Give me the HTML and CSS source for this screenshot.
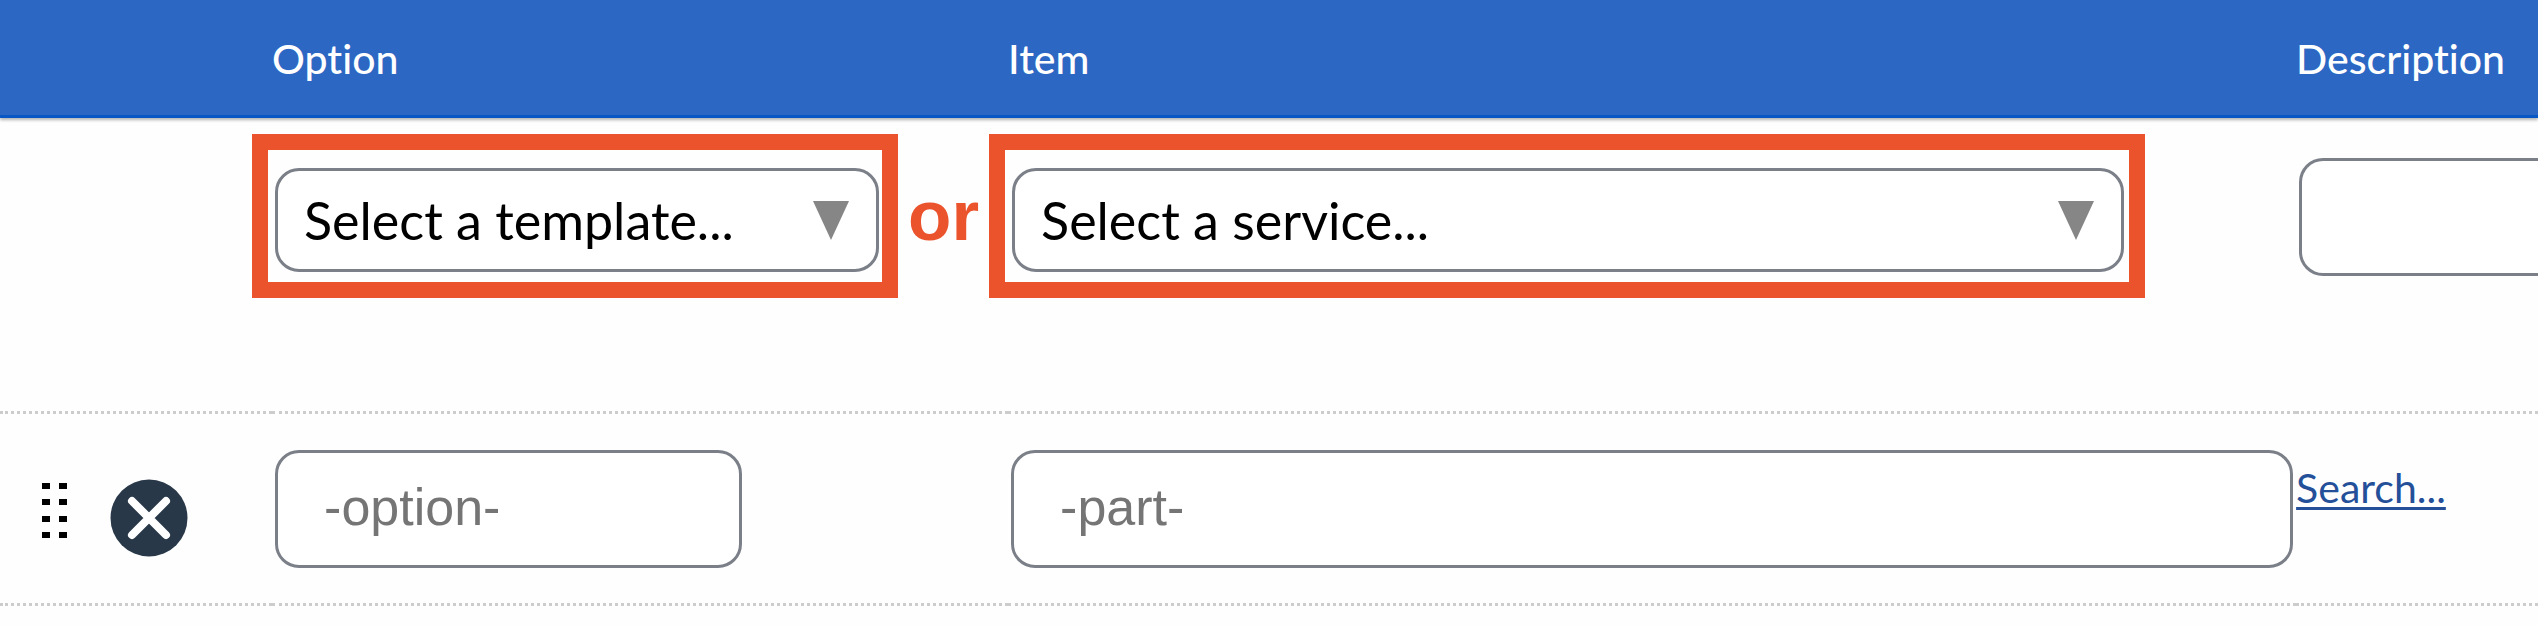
FILE: index.html
```html
<!DOCTYPE html>
<html lang="en">
  <head>
    <title>Line items</title>
    <meta charset="utf-8">
    <link rel="stylesheet" href="styles.css">
  </head>
  <body>

  <table class="items">
    <thead>
      <tr>
        <th class="col-actions"></th>
        <th class="col-option">Option</th>
        <th class="col-item">Item</th>
        <th class="col-description">Description</th>
      </tr>
    </thead>
    <tbody>
      <tr class="add-row">
        <td></td>
        <td>
          <div class="choice">
            <div class="highlight">
              <div class="picker">
                <select aria-label="Template">
                  <option>Select a template...</option>
                </select>
                <svg class="arrow" viewBox="0 0 36 39" aria-hidden="true"><path d="M0 0H36L18 39Z"/></svg>
              </div>
            </div>
            <span class="or">or</span>
          </div>
        </td>
        <td>
          <div class="highlight highlight-item">
            <div class="picker">
              <select aria-label="Service">
                <option>Select a service...</option>
              </select>
              <svg class="arrow" viewBox="0 0 36 39" aria-hidden="true"><path d="M0 0H36L18 39Z"/></svg>
            </div>
          </div>
        </td>
        <td class="description">
          <input type="text" class="field field-description" aria-label="Description">
        </td>
      </tr>
      <tr class="item-row">
        <td>
          <div class="actions">
            <button type="button" class="drag" aria-label="Move row">
              <svg width="28" height="56" viewBox="0 0 28 56">
                <path d="M2 1h8v6h-8zM19 1h8v6h-8zM2 17h8v6h-8zM19 17h8v6h-8zM2 34h8v6h-8zM19 34h8v6h-8zM2 50h8v6h-8zM19 50h8v6h-8z"/>
              </svg>
            </button>
            <button type="button" class="remove" aria-label="Remove row">
              <svg width="78" height="78" viewBox="0 0 78 78">
                <circle cx="39" cy="39" r="38.5" fill="#283848"/>
                <path d="M22 22L56 56M56 22L22 56" stroke="#fff" stroke-width="8" stroke-linecap="round"/>
              </svg>
            </button>
          </div>
        </td>
        <td><input type="text" class="field field-option" placeholder="-option-" aria-label="Option"></td>
        <td><input type="text" class="field field-part" placeholder="-part-" aria-label="Part"></td>
        <td><a class="search" href="#">Search...</a></td>
      </tr>
    </tbody>
  </table>

  </body>
</html>
```
FILE: styles.css
```css
body {
  margin: 0;
  background: #fefefe;
  color: #000;
  font-family: Lato, "Liberation Sans", sans-serif;
  font-variant-ligatures: none;
}

.items {
  width: 100%;
  table-layout: fixed;
  border-collapse: separate;
  border-spacing: 0;
}

thead tr {
  background: #2c67c3;
  box-shadow: 0 2px 3px rgba(0,0,0,0.3);
}

th,
td {
  padding: 0;
  text-align: left;
  vertical-align: top;
}

th {
  box-sizing: border-box;
  height: 118px;
  padding-top: 2px;
  border-bottom: 3px solid #0758c4;
  color: #fff;
  font-size: 41px;
  font-weight: 500;
  line-height: 48px;
  vertical-align: middle;
}

td {
  border-bottom: 3px dotted #ccc;
}

.col-actions {
  width: 10.72%;
}
.col-option {
  width: 29%;
}
.col-item {
  width: 50.75%;
}

/* new line */

.add-row td {
  height: 277px;
  padding-top: 16px;
}

.add-row .description {
  height: 253px;
  padding-top: 40px;
}

.choice {
  display: flex;
  align-items: center;
  margin: 0 19px 0 -20px;
}

.highlight {
  flex: 1;
  padding: 18px 3px 10px 7px;
  border: 16px solid #eb532d;
}

.highlight-item {
  margin: 0 151px 0 -19px;
  padding-right: 5px;
}

.or {
  width: 91px;
  color: #eb532d;
  font-family: "Liberation Sans", Arial, sans-serif;
  font-size: 71px;
  font-weight: bold;
  line-height: 80px;
  text-align: center;
}

.picker {
  display: grid;
  align-items: center;
}

.picker select,
.arrow {
  grid-area: 1 / 1;
}

.picker select {
  width: 100%;
  height: 104px;
  padding: 0 70px 0 26px;
  border: 3px solid #7b7f88;
  border-radius: 24px;
  background: #fff;
  color: #000;
  font-family: inherit;
  font-size: 52px;
  appearance: none;
}

.arrow {
  justify-self: end;
  width: 36px;
  height: 39px;
  margin-right: 30px;
  fill: #868686;
  pointer-events: none;
}

/* saved line */

.item-row td {
  height: 153px;
  padding-top: 36px;
}

.actions {
  display: flex;
  align-items: center;
  gap: 42px;
  padding: 29px 0 0 40px;
}

.actions button {
  padding: 0;
  border: 0;
  background: none;
  cursor: pointer;
}

.actions svg {
  display: block;
}

.drag {
  margin-bottom: 16px;
}

.field {
  box-sizing: border-box;
  display: block;
  height: 118px;
  margin: 0 0 0 3px;
  padding: 0 46px 4px;
  border: 3px solid #7b7f88;
  border-radius: 24px;
  background: #fff;
  font-family: "Liberation Sans", Arial, sans-serif;
  font-size: 52px;
}

.field::placeholder {
  color: #757575;
}

.field-option {
  width: 63.5%;
}
.field-part {
  width: calc(100% - 6px);
}
/* runs to the edge of the table, so it is open on the right */
.field-description {
  width: calc(100% - 3px);
  border-right: 0;
  border-radius: 24px 0 0 24px;
}

.search {
  display: block;
  padding-top: 14px;
  color: #24509a;
  font-size: 41px;
  line-height: 48px;
  text-decoration-thickness: 3px;
  text-underline-offset: 4px;
}
```
